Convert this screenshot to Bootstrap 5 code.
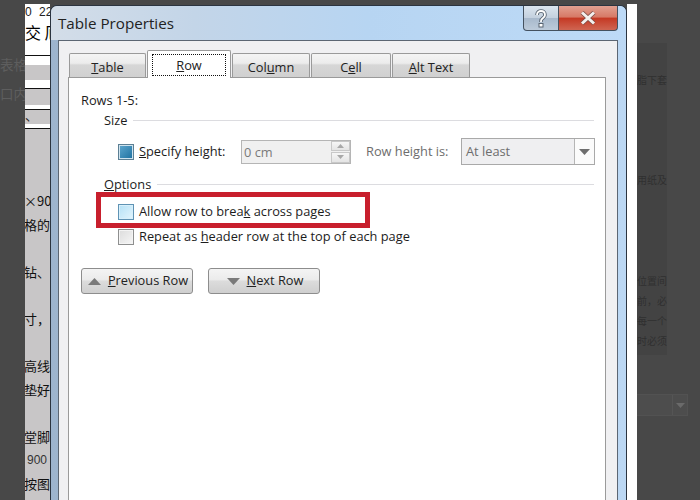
<!DOCTYPE html>
<html lang="en">
<head>
    <meta charset="UTF-8">
    <meta name="viewport" content="width=device-width, initial-scale=1.0">
    <title>Table Properties</title>
    <link href="https://cdn.jsdelivr.net/npm/bootstrap@5.3.2/dist/css/bootstrap.min.css" rel="stylesheet">
    <style>
        html, body {
            margin: 0;
            height: 100%;
            overflow: hidden;
            background: #484848;
        }
        .screen {
            width: 700px;
            height: 500px;
            overflow: hidden;
            font-family: "Open Sans", "Noto Sans", "Noto Sans CJK SC", sans-serif;
            font-size: 12.8px;
            color: #1c1c1c;
            white-space: nowrap;
        }
        /* dimmed page left of the document strip */
        .dim-col {
            width: 25px;
            flex: none;
            overflow: hidden;
            color: #5e5e5e;
            font-family: "Noto Sans CJK SC", sans-serif;
            font-size: 13.5px;
            padding-top: 54px;
        }
        .dim-col div { height: 29px; line-height: 20px; }
        .doc-strip {
            width: 25px;
            flex: none;
            margin-top: 4px;
            background: #fff;
            overflow: hidden;
            font-family: "Noto Sans CJK SC", sans-serif;
            font-size: 13px;
            color: #222;
            line-height: 1;
        }
        .strip-head { height: 18px; padding-top: 2px; font-family: "Liberation Sans", sans-serif; font-size: 12px; word-spacing: 4px; }
        .strip-title { height: 31px; padding-top: 2px; font-size: 16px; color: #000; border-bottom: 1px solid #111; box-sizing: content-box; }
        .strip-band { background: #c8c6c7; }
        .band-a { height: 15px; margin-top: 9px; margin-bottom: 8px; }
        .band-b { height: 17px; border-top: 1px solid #111; margin-bottom: 1px; padding-top: 2px; }
        .band-c { height: 15px; margin-top: 4px; border-top: 1px solid #111; line-height: 10px; }
        .strip-grey {
            background: #c8c6c7;
            height: 380px;
            margin-top: 4px;
            border-top: 1px solid #111;
            padding-top: 60px;
            color: #111;
        }
        .strip-grey div { height: 23.6px; line-height: 23.6px; margin-left: -1px; }
        .strip-num { padding-left: 3px; font-family: "Liberation Sans", sans-serif; font-size: 12px; color: #333; }

        /* dialog window */
        .win {
            width: 577px;
            height: 520px;
            flex: none;
            margin-top: 5px;
            border: 1px solid #2b3440;
            border-bottom: 0;
            border-radius: 7px 7px 0 0;
            background: linear-gradient(90deg, #9db4ce 0, #a9c2dd 30%, #bcd8f4 100%);
            padding: 0 8px 0 7px;
        }
        .win-bar {
            margin: 0 -8px 0 -7px;
            padding: 0 8px 0 7px;
            border-radius: 6px 6px 0 0;
            background: linear-gradient(90deg, #d3dde8 0, #c3d5e8 25%, #b7d5f2 55%, #bddaf7 100%);
        }
        .win-title {
            height: 34px;
            font-size: 15.2px;
            line-height: 34px;
            color: #222;
        }
        .cap-btn {
            height: 25px;
            border: 1px solid #44515f;
            border-top: 0;
            flex: none;
        }
        .cap-help {
            width: 36px;
            border-radius: 0 0 0 4px;
            background: linear-gradient(#dbe5ef 0, #c3d0de 50%, #a8b9cc 52%, #bccbda 100%);
        }
        .cap-close {
            width: 59px;
            border-left: 0;
            border-radius: 0 0 4px 0;
            background: linear-gradient(#e2a091 0, #d77a67 45%, #c53a25 52%, #cf6552 100%);
        }
        .panel {
            height: 480px;
            background: #f0f0f2;
            border: 1px solid #5c6673;
            padding: 9px 11px 0 9px;
        }
        .nav-tabs.win-tabs {
            border-bottom: 0;
            height: 27px;
            gap: 1px;
            padding-left: 1px;
            position: relative;
            z-index: 1;
            align-items: flex-end;
            flex-wrap: nowrap;
        }
        .win-tabs .nav-link {
            height: 24px;
            margin: 0;
            padding: 3px 0 0;
            text-align: center;
            font-size: 12.8px;
            line-height: 20px;
            color: #222;
            border: 1px solid #9a9a9a;
            border-bottom: 0;
            border-radius: 2px 2px 0 0;
            background: linear-gradient(#f4f4f4 0, #ececec 40%, #d6d6d6 48%, #d0d0d0 100%);
        }
        .win-tabs .nav-link.active {
            height: 28px;
            margin-bottom: -1px;
            background: #fff;
            color: #222;
            border-color: #9a9a9a;
            padding: 3px 4px;
        }
        .tab-table { width: 77px; }
        .tab-row { width: 84px; }
        .tab-column { width: 78px; }
        .tab-cell { width: 80px; }
        .tab-alt { width: 78px; }
        .focus-box {
            display: block;
            height: 22px;
            line-height: 20px;
            border: 1px dotted #111;
        }
        .tab-page {
            height: 460px;
            background: #fff;
            border: 1px solid #9a9a9a;
            padding: 12px 11px 0 12px;
        }
        .rows-label { height: 20px; line-height: 20px; }
        .legend-row {
            height: 20px;
            line-height: 20px;
            padding-left: 23px;
            gap: 6px;
        }
        .legend-rule { flex: 1; height: 1px; background: #dcdce0; }
        .size-row {
            height: 27px;
            margin-top: 8px;
            padding-left: 37px;
        }
        .options-legend { margin-top: 9px; }
        .check-list { margin-top: 5px; }
        .check-row {
            padding-left: 37px;
            height: 25px;
            gap: 5px;
        }
        .win-check {
            width: 16px;
            height: 16px;
            margin: 0;
            flex: none;
            border: 1px solid #8e8f8f;
            background: linear-gradient(135deg, #dcdcdc, #f6f6f6);
            box-shadow: inset 0 0 0 1px #f4f4f4;
        }
        .win-check.is-hot {
            border-color: #5f93b4;
            background: linear-gradient(135deg, #b5e1f6, #e3f5fd);
            box-shadow: inset 0 0 0 1px #d8f0fb;
        }
        .win-check.is-fill {
            border-color: #5c7f94;
            background: linear-gradient(135deg, #5fa8cf, #1c6f9f);
            box-shadow: inset 0 0 0 1px #cfe3ee;
        }
        .spec-label { width: 102px; margin-left: 5px; flex: none; }
        .height-label { width: 95px; margin-left: 15px; flex: none; color: #6d6d6d; }
        .spin-wrap {
            width: 110px;
            height: 24px;
            border: 1px solid #b5b5b5;
            background: #f0f0f0;
            flex: none;
        }
        .form-control.spin-input {
            height: 22px;
            padding: 0 1px 0 2px;
            background: transparent;
            border: 0;
            border-radius: 0;
            font: inherit;
            color: #7a7a7a;
        }
        .spin-btns { width: 19px; flex: none; gap: 1px; }
        .spin-btns span {
            flex: 1;
            background: linear-gradient(#f6f6f6, #e4e4e4);
            border: 1px solid #c8c8c8;
        }
        .pick-wrap {
            width: 134px;
            height: 27px;
            border: 1px solid #a9a9a9;
            background: #efeff1;
            flex: none;
            padding-left: 4px;
            color: #6d6d6d;
        }
        .pick-arrow {
            width: 20px;
            height: 25px;
            background: #fbfbfb;
            border-left: 1px solid #b5b5b5;
        }
        .red-mark {
            position: absolute;
            left: 15px;
            top: -7px;
            width: 274px;
            height: 36px;
            border: 5px solid #c81f2d;
            pointer-events: none;
        }
        .win-btns { margin-top: 19px; gap: 15px; }
        .btn.win-btn {
            width: 112px;
            height: 26px;
            padding: 0 0 0 2px;
            font: inherit;
            color: #222;
            border: 1px solid #8d8d8d;
            border-radius: 3px;
            background: linear-gradient(#f4f4f4 0, #ebebeb 45%, #dcdcdc 50%, #cfcfcf 100%);
            gap: 7px;
        }

        /* right side, dimmed page */
        .white-edge { width: 10px; background: #fff; margin-top: 4px; flex: none; }
        .dim-right {
            flex: 1;
            color: #303030;
            font-family: "Noto Sans CJK SC", sans-serif;
            font-size: 10px;
        }
        .dim-block {
            width: 30px;
            height: 312px;
            margin-top: 43px;
            background: #434343;
            overflow: hidden;
        }
        .dim-block div { height: 20px; line-height: 20px; }
        .dim-block .gap-a { height: 27px; }
        .dim-block .gap-b { height: 80px; }
        .dim-block .gap-c { height: 81px; }
        .dim-pick {
            width: 51px;
            height: 22px;
            margin-top: 39px;
            background: #4d4d4d;
            border: 1px solid #525252;
            border-left: 0;
        }
        .dim-pick span { width: 15px; height: 20px; border-left: 1px solid #555; }
    </style>
</head>
<body>
    <div class="screen d-flex">
        <div class="dim-col">
            <div>表格</div>
            <div>口内</div>
        </div>

        <div class="doc-strip">
            <div class="strip-head">0 22</div>
            <div class="strip-title">交 厄</div>
            <div class="strip-band band-a"></div>
            <div class="strip-band band-b"></div>
            <div class="strip-band band-c">、</div>
            <div class="strip-grey">
                <div>×90</div>
                <div>格的</div>
                <div></div>
                <div>钻、</div>
                <div></div>
                <div>寸，</div>
                <div></div>
                <div>高线</div>
                <div>垫好</div>
                <div></div>
                <div>堂脚</div>
                <div class="strip-num">900</div>
                <div>按图</div>
            </div>
        </div>

        <div class="win">
            <div class="win-bar d-flex">
                <div class="win-title flex-grow-1">Table Properties</div>
                <div class="cap-btn cap-help d-flex align-items-center justify-content-center">
                    <svg width="14" height="19" viewBox="0 0 14 19"><path d="M3 6C3 3 5 2 7 2s4 1 4 4c0 3-4 3-4 6v1" fill="none" stroke="#5a6673" stroke-width="3.6"/><path d="M3 6C3 3 5 2 7 2s4 1 4 4c0 3-4 3-4 6v1" fill="none" stroke="#fff" stroke-width="1.8"/><rect x="5" y="14.500" width="4" height="3.500" fill="#fff" stroke="#5a6673"/></svg>
                </div>
                <div class="cap-btn cap-close d-flex align-items-center justify-content-center">
                    <svg width="16" height="14" viewBox="0 0 16 14"><path d="M2 1.500l12 11M14 1.500l-12 11" stroke="#7a4a44" stroke-width="4.400"/><path d="M2 1.500l12 11M14 1.500l-12 11" stroke="#f4f0ee" stroke-width="3"/></svg>
                </div>
            </div>

            <div class="panel">
                <ul class="nav nav-tabs win-tabs">
                    <li class="nav-item tab-table"><a class="nav-link" href="#"><u>T</u>able</a></li>
                    <li class="nav-item tab-row"><a class="nav-link active" href="#"><span class="focus-box"><u>R</u>ow</span></a></li>
                    <li class="nav-item tab-column"><a class="nav-link" href="#">Col<u>u</u>mn</a></li>
                    <li class="nav-item tab-cell"><a class="nav-link" href="#">C<u>e</u>ll</a></li>
                    <li class="nav-item tab-alt"><a class="nav-link" href="#"><u>A</u>lt Text</a></li>
                </ul>
                <div class="tab-page">
                    <div class="rows-label">Rows 1-5:</div>
                    <div class="legend-row d-flex align-items-center"><span>Size</span><span class="legend-rule"></span></div>
                    <div class="size-row d-flex align-items-center">
                        <span class="win-check is-fill"></span>
                        <span class="spec-label"><u>S</u>pecify height:</span>
                        <div class="spin-wrap d-flex">
                            <input class="form-control spin-input" value="0 cm" disabled>
                            <div class="spin-btns d-flex flex-column">
                                <span class="d-flex align-items-center justify-content-center"><svg width="7" height="4"><path d="M3.500 0L7 4H0z" fill="#a8a8a8"/></svg></span>
                                <span class="d-flex align-items-center justify-content-center"><svg width="7" height="4"><path d="M0 0h7L3.500 4z" fill="#a8a8a8"/></svg></span>
                            </div>
                        </div>
                        <span class="height-label">Row height is:</span>
                        <div class="pick-wrap d-flex align-items-center justify-content-between">
                            <span>At least</span>
                            <span class="pick-arrow d-flex align-items-center justify-content-center"><svg width="11" height="6"><path d="M0 0h11L5.500 6z" fill="#6e6e6e"/></svg></span>
                        </div>
                    </div>
                    <div class="legend-row options-legend d-flex align-items-center"><span><u>O</u>ptions</span><span class="legend-rule"></span></div>
                    <div class="check-list position-relative">
                        <div class="check-row d-flex align-items-center">
                            <span class="win-check is-hot"></span>
                            <span>Allow row to brea<u>k</u> across pages</span>
                        </div>
                        <div class="check-row d-flex align-items-center">
                            <span class="win-check"></span>
                            <span>Repeat as <u>h</u>eader row at the top of each page</span>
                        </div>
                        <div class="red-mark"></div>
                    </div>
                    <div class="win-btns d-flex">
                        <button class="btn win-btn d-flex align-items-center justify-content-center" type="button">
                            <svg width="13" height="7"><path d="M6.500 0L13 7H0z" fill="#7a7a7a"/></svg>
                            <span><u>P</u>revious Row</span>
                        </button>
                        <button class="btn win-btn d-flex align-items-center justify-content-center" type="button">
                            <svg width="13" height="7"><path d="M0 0h13L6.500 7z" fill="#7a7a7a"/></svg>
                            <span><u>N</u>ext Row</span>
                        </button>
                    </div>
                </div>
            </div>
        </div>

        <div class="white-edge"></div>

        <div class="dim-right">
            <div class="dim-block">
                <div class="gap-a"></div>
                <div>脂下套</div>
                <div class="gap-b"></div>
                <div>用纸及</div>
                <div class="gap-c"></div>
                <div>位置间</div>
                <div>前，必</div>
                <div>每一个</div>
                <div>时必须</div>
            </div>
            <div class="dim-pick d-flex justify-content-end align-items-center"><span class="d-flex align-items-center justify-content-center"><svg width="9" height="5"><path d="M0 0h9L4.500 5z" fill="#6a6a6a"/></svg></span></div>
        </div>
    </div>
</body>
</html>
